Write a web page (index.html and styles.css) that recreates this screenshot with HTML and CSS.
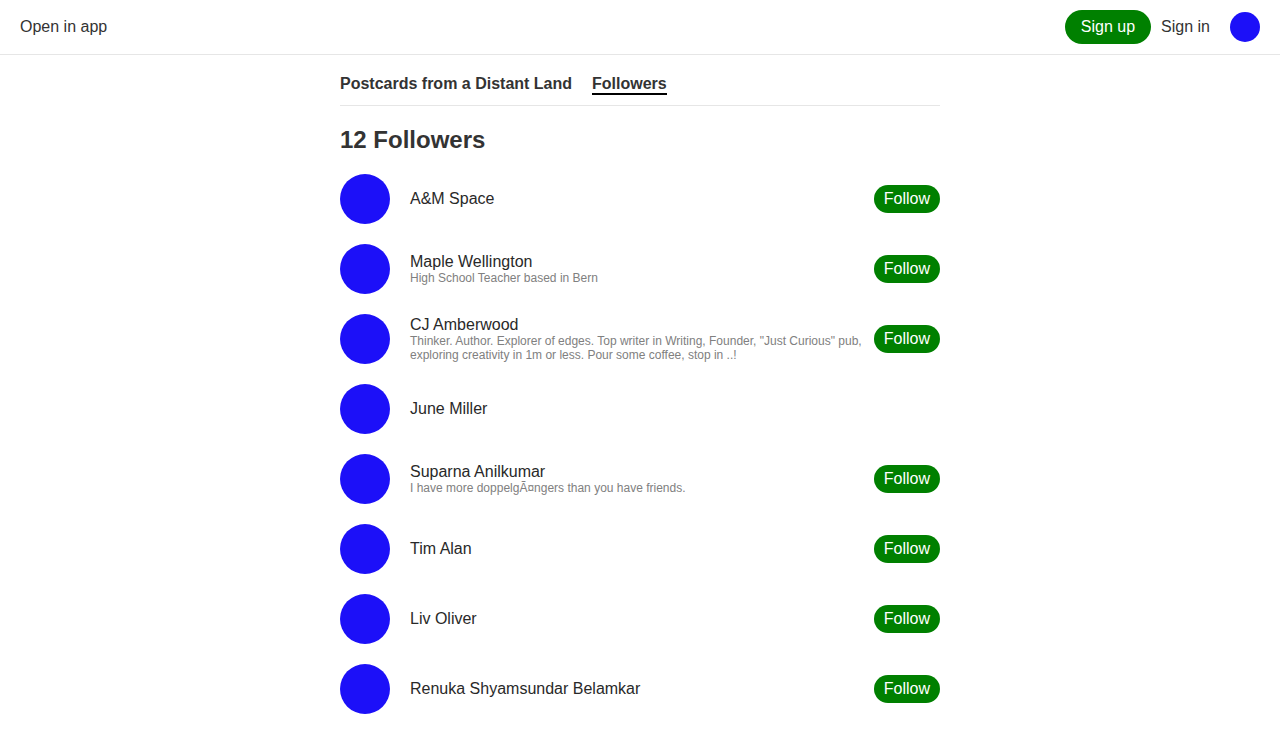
FILE: index.html
```html
<!DOCTYPE html>
<html lang="en">
<head>
<meta charset="utf-8">
<title>Followers</title>
<link rel="stylesheet" href="styles.css">
</head>
<body>
<header class="topbar">
  <a class="link" href="#">Open in app</a>
  <div class="account">
    <button class="signup" type="button">Sign up</button>
    <a class="link signin" href="#">Sign in</a>
    <span class="avatar avatar-small"></span>
  </div>
</header>
<main class="content">
  <nav class="crumbs">
    <a class="crumb" href="#">Postcards from a Distant Land</a>
    <a class="crumb crumb-current" href="#">Followers</a>
  </nav>
  <h1 class="title">12 Followers</h1>
  <ul class="list">
    <li class="row"><span class="avatar"></span><div class="info"><p class="name">A&amp;M Space</p></div><button class="follow" type="button">Follow</button></li>
    <li class="row"><span class="avatar"></span><div class="info"><p class="name">Maple Wellington</p><p class="bio">High School Teacher based in Bern</p></div><button class="follow" type="button">Follow</button></li>
    <li class="row"><span class="avatar"></span><div class="info"><p class="name">CJ Amberwood</p><p class="bio">Thinker. Author. Explorer of edges. Top writer in Writing, Founder, "Just Curious" pub, exploring creativity in 1m or less. Pour some coffee, stop in ..!</p></div><button class="follow" type="button">Follow</button></li>
    <li class="row"><span class="avatar"></span><div class="info"><p class="name">June Miller</p></div></li>
    <li class="row"><span class="avatar"></span><div class="info"><p class="name">Suparna Anilkumar</p><p class="bio">I have more doppelgÃ¤ngers than you have friends.</p></div><button class="follow" type="button">Follow</button></li>
    <li class="row"><span class="avatar"></span><div class="info"><p class="name">Tim Alan</p></div><button class="follow" type="button">Follow</button></li>
    <li class="row"><span class="avatar"></span><div class="info"><p class="name">Liv Oliver</p></div><button class="follow" type="button">Follow</button></li>
    <li class="row"><span class="avatar"></span><div class="info"><p class="name">Renuka Shyamsundar Belamkar</p></div><button class="follow" type="button">Follow</button></li>
  </ul>
</main>
</body>
</html>
```

FILE: styles.css
```css
* {
  box-sizing: border-box;
  margin: 0;
  padding: 0;
}

body {
  font-family: "Liberation Sans", Arial, sans-serif;
  font-size: 16px;
  line-height: 18px;
  color: #333;
  background: #fff;
}

button {
  font: inherit;
  color: #fff;
  background: #008000;
  border: 0;
  cursor: pointer;
}

.topbar {
  display: flex;
  align-items: center;
  justify-content: space-between;
  padding: 10px 20px;
  border-bottom: 1px solid #e6e6e6;
}

.account {
  display: flex;
  align-items: center;
}

.link,
.crumb {
  color: inherit;
  text-decoration: none;
}

.signup {
  padding: 8px 16px;
  border-radius: 17px;
}

.signin {
  margin: 0 20px 0 10px;
}

.avatar {
  flex: none;
  width: 50px;
  height: 50px;
  border-radius: 50%;
  background: #1c10f8;
}

.avatar-small {
  width: 30px;
  height: 30px;
}

.content {
  max-width: 640px;
  margin: 0 auto;
  padding: 20px;
}

.crumbs {
  display: flex;
  gap: 20px;
  padding-bottom: 10px;
  border-bottom: 1px solid #e6e6e6;
  font-weight: bold;
}

.crumb {
  border-bottom: 2px solid transparent;
}

.crumb-current {
  border-color: #000;
}

.title {
  margin: 20px 0;
  font-size: 24px;
  line-height: 28px;
}

.list {
  display: flex;
  flex-direction: column;
  gap: 20px;
  list-style: none;
}

.row {
  display: flex;
  align-items: center;
}

.info {
  flex: 1;
  min-width: 0;
  margin: 0 10px 0 20px;
}

.name {
  color: #292929;
}

.bio {
  font-size: 12px;
  line-height: 14px;
  color: #808080;
}

.follow {
  padding: 5px 10px;
  border-radius: 14px;
}
```
